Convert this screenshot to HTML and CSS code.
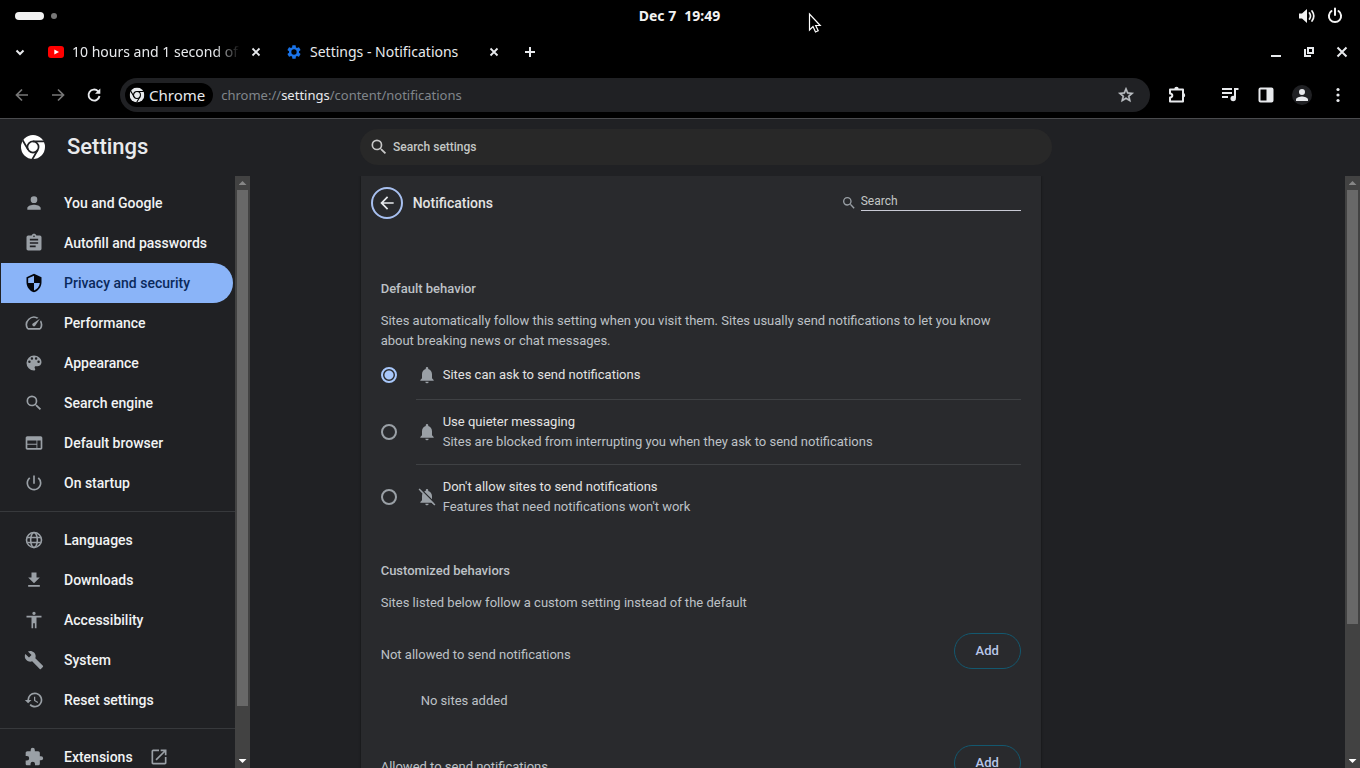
FILE: index.html
```html
<!DOCTYPE html>
<html lang="en">
  <head>
    <meta charset="UTF-8" />
    <meta name="viewport" content="width=device-width, initial-scale=1.0" />
    <title>Settings - Notifications</title>
    <link rel="stylesheet" href="styles.css">
  </head>
  <body>
    <!-- Desktop top bar -->
    <div class="topbar">
      <div class="workspaces">
        <span class="workspace active"></span>
        <span class="workspace"></span>
      </div>
      <time class="clock"><span>Dec 7</span><span>19:49</span></time>
      <div class="system-icons">
        <svg class="icon-18" viewBox="0 0 18 18"><path d="M1 6.500h3L9 2v14l-5-4.500H1z" fill="currentColor"/><path d="M11.500 6q2 3 0 6M14 4q3.600 5 0 10" fill="none" stroke="currentColor" stroke-width="1.700" stroke-linecap="round"/></svg>
        <svg class="icon-18" viewBox="0 0 18 18"><path d="M5.500 4a6.100 6.100 0 1 0 7 0M9 1.500V8" fill="none" stroke="currentColor" stroke-width="2" stroke-linecap="round"/></svg>
      </div>
    </div>

    <!-- Tab strip -->
    <div class="tabstrip">
      <button class="tab-search" aria-label="Search tabs"><svg class="icon-16" viewBox="0 0 16 16"><path d="M4.500 6.500 8 10l3.500-3.500" fill="none" stroke="currentColor" stroke-width="2"/></svg></button>
      <div class="tab">
        <svg class="icon-16" viewBox="0 0 16 16"><rect y="2" width="16" height="12" rx="3" fill="#f00"/><path d="M6.300 5.400v5.200L11 8z" fill="#fff"/></svg>
        <span class="tab-title fade">10 hours and 1 second of</span>
        <button aria-label="Close tab"><svg class="icon-16" viewBox="0 0 16 16"><path d="m4.500 4.500 7 7m0-7-7 7" stroke="currentColor" stroke-width="1.800"/></svg></button>
      </div>
      <div class="tab">
        <svg class="icon-16" viewBox="0 0 24 24"><path fill="#1a73e8" d="M19.430 12.980c.04-.32.07-.64.07-.98s-.03-.66-.07-.98l2.110-1.650c.19-.15.24-.42.12-.64l-2-3.460c-.12-.22-.39-.3-.61-.22l-2.490 1c-.52-.4-1.080-.73-1.690-.98l-.38-2.650C14.460 2.180 14.250 2 14 2h-4c-.25 0-.46.18-.49.42l-.38 2.650c-.61.25-1.170.59-1.690.98l-2.490-1c-.23-.09-.49 0-.61.22l-2 3.460c-.13.22-.07.49.12.64l2.110 1.650c-.04.32-.07.65-.07.98s.03.66.07.98l-2.110 1.650c-.19.15-.24.42-.12.64l2 3.460c.12.22.39.3.61.22l2.490-1c.52.4 1.080.73 1.690.98l.38 2.650c.03.24.24.42.49.42h4c.25 0 .46-.18.49-.42l.38-2.650c.61-.25 1.170-.59 1.690-.98l2.490 1c.23.09.49 0 .61-.22l2-3.460c.12-.22.07-.49-.12-.64zM12 16a4 4 0 1 1 0-8 4 4 0 0 1 0 8z"/></svg>
        <span class="tab-title">Settings - Notifications</span>
        <button aria-label="Close tab"><svg class="icon-16" viewBox="0 0 16 16"><path d="m4.500 4.500 7 7m0-7-7 7" stroke="currentColor" stroke-width="1.800"/></svg></button>
      </div>
      <button class="new-tab" aria-label="New tab"><svg class="icon-16" viewBox="0 0 16 16"><path d="M8 3v10M3 8h10" stroke="currentColor" stroke-width="2"/></svg></button>
      <div class="window-buttons">
        <button aria-label="Minimize"><svg class="icon-16" viewBox="0 0 16 16"><path d="M3 12h10" stroke="currentColor" stroke-width="2"/></svg></button>
        <button aria-label="Restore"><svg class="icon-16" viewBox="0 0 16 16"><path d="M7 4h5v5H7zM4 5v7h6" fill="none" stroke="currentColor" stroke-width="2"/></svg></button>
        <button aria-label="Close"><svg class="icon-16" viewBox="0 0 16 16"><path d="m3.500 3.500 9 9m0-9-9 9" stroke="currentColor" stroke-width="2"/></svg></button>
      </div>
    </div>

    <!-- Toolbar -->
    <div class="toolbar">
      <button class="disabled" aria-label="Back"><svg class="icon-16" viewBox="0 0 16 16"><path d="M14 8H3m5-5.500L2.500 8 8 13.500" fill="none" stroke="currentColor" stroke-width="1.700"/></svg></button>
      <button class="disabled" aria-label="Forward"><svg class="icon-16" viewBox="0 0 16 16"><path d="M2 8h11M8 2.500 13.500 8 8 13.500" fill="none" stroke="currentColor" stroke-width="1.700"/></svg></button>
      <button aria-label="Reload"><svg class="icon-16" viewBox="0 0 16 16"><path d="M13.500 9A5.500 5.500 0 1 1 12 4.200l1.300 1.300" fill="none" stroke="currentColor" stroke-width="1.900"/><path d="M14.300 1.500v5.300H9z" fill="currentColor"/></svg></button>
      <div class="omnibox">
        <button class="chip">
          <svg class="icon-16" viewBox="-1 -1 26 26"><use href="#chrome-logo" width="24" height="24"/></svg>
          <span>Chrome</span>
        </button>
        <span class="url">chrome://<b>settings</b>/content/notifications</span>
        <button class="star" aria-label="Bookmark this tab"><svg class="icon-18" viewBox="0 0 24 24"><path fill="currentColor" stroke="currentColor" stroke-width=".7" d="m22 9.240-7.190-.62L12 2 9.190 8.630 2 9.240l5.460 4.730L5.820 21 12 17.270 18.180 21l-1.630-7.030zM12 15.400l-3.760 2.270 1-4.280-3.320-2.880 4.380-.38L12 6.100l1.710 4.040 4.380.38-3.320 2.880 1 4.280z"/></svg></button>
      </div>
      <div class="toolbar-actions">
        <button aria-label="Extensions"><svg class="icon-18" viewBox="0 0 18 18"><path fill="none" stroke="currentColor" stroke-width="2" stroke-linejoin="round" d="M2 3.500h13v12H2v-4q2.300-.3 2.300-2T2 7.500z"/><path fill="currentColor" d="M6.300 3a2.200 2.200 0 0 1 4.400 0zM15 7a2.200 2.200 0 0 1 0 4.400z"/></svg></button>
        <button class="media" aria-label="Media controls"><svg class="icon-18" viewBox="0 0 18 18"><path d="M1 3h10M1 7h10M1 11h6" stroke="currentColor" stroke-width="1.800"/><path d="M14 12V3h3.500" fill="none" stroke="currentColor" stroke-width="2"/><circle cx="12.200" cy="12.500" r="2.700" fill="currentColor"/></svg></button>
        <button aria-label="Side panel"><svg class="icon-18" viewBox="0 0 18 18"><rect x="2.500" y="2.500" width="13" height="13" rx="1" fill="none" stroke="currentColor" stroke-width="2"/><path d="M9.500 2H16v14H9.500z" fill="currentColor"/></svg></button>
        <button class="profile" aria-label="Profile"><svg class="icon-18" viewBox="0 0 24 24"><use href="#person"/></svg></button>
        <button aria-label="Menu"><svg class="icon-18" viewBox="0 0 18 18" fill="currentColor"><circle cx="9" cy="3.500" r="1.600"/><circle cx="9" cy="9" r="1.600"/><circle cx="9" cy="14.500" r="1.600"/></svg></button>
      </div>
    </div>

    <!-- Settings page -->
    <header class="page-header">
      <div class="brand">
        <svg class="icon-24" viewBox="0 0 24 24"><use href="#chrome-logo"/></svg>
        <h1>Settings</h1>
      </div>
      <label class="settings-search">
        <svg class="icon-20" viewBox="0 0 24 24"><use href="#search"/></svg>
        <input type="text" placeholder="Search settings" aria-label="Search settings">
      </label>
    </header>

    <div class="page">
      <nav class="sidebar">
        <a href="#"><svg class="icon-20" viewBox="0 0 24 24"><use href="#person"/></svg>You and Google</a>
        <a href="#"><svg class="icon-20" viewBox="0 0 24 24"><path d="M19 3h-4.180C14.400 1.840 13.300 1 12 1s-2.400.84-2.820 2H5a2 2 0 0 0-2 2v14c0 1.100.9 2 2 2h14a2 2 0 0 0 2-2V5a2 2 0 0 0-2-2zm-7 0a1 1 0 1 1 0 2 1 1 0 0 1 0-2zm2 14H7v-2h7zm3-4H7v-2h10zm0-4H7V7h10z"/></svg>Autofill and passwords</a>
        <a href="#" class="selected"><svg class="icon-20" viewBox="0 0 24 24"><path d="M12 1 3 5v6c0 5.550 3.840 10.740 9 12 5.160-1.260 9-6.450 9-12V5zm0 10.990h7c-.53 4.120-3.280 7.790-7 8.940V12H5V6.300l7-3.110z"/></svg>Privacy and security</a>
        <a href="#"><svg class="icon-20" viewBox="0 0 24 24"><path d="m20.380 8.570-1.230 1.850a8 8 0 0 1-.22 7.580H5.070A8 8 0 0 1 15.580 6.850l1.850-1.230A10 10 0 0 0 3.350 19a2 2 0 0 0 1.720 1h13.850a2 2 0 0 0 1.740-1 10 10 0 0 0-.27-10.440zm-9.790 6.840a2 2 0 0 0 2.830 0l5.660-8.490-8.490 5.660a2 2 0 0 0 0 2.830z"/></svg>Performance</a>
        <a href="#"><svg class="icon-20" viewBox="0 0 24 24"><path d="M12 3a9 9 0 0 0 0 18c.83 0 1.500-.67 1.500-1.500 0-.39-.15-.74-.39-1.010-.23-.26-.38-.61-.38-.99 0-.83.67-1.500 1.500-1.500H16c2.760 0 5-2.240 5-5 0-4.420-4.030-8-9-8zm-5.500 9a1.500 1.500 0 1 1 0-3 1.500 1.500 0 0 1 0 3zm3-4a1.500 1.500 0 1 1 0-3 1.500 1.500 0 0 1 0 3zm5 0a1.500 1.500 0 1 1 0-3 1.500 1.500 0 0 1 0 3zm3 4a1.500 1.500 0 1 1 0-3 1.500 1.500 0 0 1 0 3z"/></svg>Appearance</a>
        <a href="#"><svg class="icon-20" viewBox="0 0 24 24"><use href="#search"/></svg>Search engine</a>
        <a href="#"><svg class="icon-20" viewBox="0 0 24 24"><path d="M20 4H4c-1.100 0-1.990.9-1.990 2L2 18c0 1.100.9 2 2 2h16c1.100 0 2-.9 2-2V6c0-1.100-.9-2-2-2zm-5 14H4v-4h11zm0-5H4V9h11zm5 5h-4V9h4z"/></svg>Default browser</a>
        <a href="#"><svg class="icon-20" viewBox="0 0 24 24"><path d="M13 3h-2v10h2zm4.830 2.170-1.420 1.420A6.920 6.920 0 0 1 19 12a7 7 0 1 1-11.420-5.420L6.170 5.170A9 9 0 1 0 21 12a8.930 8.930 0 0 0-3.170-6.830z"/></svg>On startup</a>
        <hr>
        <a href="#"><svg class="icon-20" viewBox="0 0 24 24"><g fill="none" stroke="currentColor" stroke-width="1.900"><circle cx="12" cy="12" r="9"/><ellipse cx="12" cy="12" rx="4" ry="9"/><path d="M4 9h16M4 15h16"/></g></svg>Languages</a>
        <a href="#"><svg class="icon-20" viewBox="0 0 24 24"><path d="M19 9h-4V3H9v6H5l7 7zM5 18v2h14v-2z"/></svg>Downloads</a>
        <a href="#"><svg class="icon-20" viewBox="0 0 24 24"><path d="M12 2a2 2 0 1 1 0 4 2 2 0 0 1 0-4zm9 7h-6v13h-2v-6h-2v6H9V9H3V7h18z"/></svg>Accessibility</a>
        <a href="#"><svg class="icon-20" viewBox="0 0 24 24"><path d="m22.700 19-9.100-9.100c.9-2.300.4-5-1.500-6.900-2-2-5-2.400-7.400-1.300L9 6 6 9 1.600 4.700C.4 7.100.9 10.100 2.900 12.100c1.900 1.900 4.600 2.400 6.900 1.500l9.100 9.100c.4.4 1 .4 1.400 0l2.300-2.300c.5-.4.5-1.100.1-1.400z"/></svg>System</a>
        <a href="#"><svg class="icon-20" viewBox="0 0 24 24"><path d="M13 3a9 9 0 0 0-9 9H1l3.890 3.890.07.14L9 12H6a7 7 0 1 1 2.060 4.940l-1.420 1.420A9 9 0 1 0 13 3zm-1 5v5l4.280 2.540.72-1.210-3.500-2.080V8z"/></svg>Reset settings</a>
        <hr>
        <a href="#"><svg class="icon-20" viewBox="0 0 24 24"><path d="M20.500 11H19V7a2 2 0 0 0-2-2h-4V3.500a2.500 2.500 0 0 0-5 0V5H4c-1.100 0-1.990.9-1.990 2v3.800H3.500a2.700 2.700 0 0 1 0 5.400H2V20c0 1.100.9 2 2 2h3.800v-1.500a2.700 2.700 0 0 1 5.400 0V22H17a2 2 0 0 0 2-2v-4h1.500a2.500 2.500 0 0 0 0-5z"/></svg>Extensions<svg class="icon-20 external" viewBox="0 0 24 24"><path d="M19 19H5V5h7V3H5a2 2 0 0 0-2 2v14c0 1.100.89 2 2 2h14c1.100 0 2-.9 2-2v-7h-2zM14 3v2h3.590l-9.830 9.830 1.410 1.410L19 6.410V10h2V3z"/></svg></a>
      </nav>
      <div class="scrollbar" aria-hidden="true">
        <span class="arrow up"></span>
        <div class="track"><div class="thumb nav-thumb"></div></div>
        <span class="arrow down"></span>
      </div>

      <main>
        <div class="card">
          <div class="card-header">
            <button class="back" aria-label="Back"><svg class="icon-20" viewBox="0 0 24 24"><path d="M20 11H7.830l5.590-5.590L12 4l-8 8 8 8 1.410-1.410L7.830 13H20z"/></svg></button>
            <h2>Notifications</h2>
            <label class="card-search">
              <svg class="icon-16" viewBox="0 0 24 24"><use href="#search"/></svg>
              <input type="text" placeholder="Search" aria-label="Search sites">
            </label>
          </div>

          <section>
            <h3>Default behavior</h3>
            <p>Sites automatically follow this setting when you visit them. Sites usually send notifications to let you know about breaking news or chat messages.</p>
            <div class="option">
              <input type="radio" name="behavior" id="ask" checked>
              <label for="ask">
                <svg class="icon-20" viewBox="0 0 24 24"><use href="#bell"/></svg>
                <span>Sites can ask to send notifications</span>
              </label>
            </div>
            <div class="option two-line">
              <input type="radio" name="behavior" id="quiet">
              <label for="quiet">
                <svg class="icon-20" viewBox="0 0 24 24"><use href="#bell"/></svg>
                <span>Use quieter messaging<small>Sites are blocked from interrupting you when they ask to send notifications</small></span>
              </label>
            </div>
            <div class="option two-line">
              <input type="radio" name="behavior" id="block">
              <label for="block">
                <svg class="icon-20" viewBox="0 0 24 24"><path d="M20 18.690 7.840 6.140 5.270 3.490 4 4.760l2.800 2.800v.01c-.52.99-.8 2.160-.8 3.420v5l-2 2v1h13.730l2 2L21 19.720zM12 22a2 2 0 0 0 2-2h-4c0 1.110.89 2 2 2zm6-7.320V11c0-3.080-1.640-5.640-4.500-6.320V4a1.500 1.500 0 0 0-3 0v.68c-.15.03-.29.08-.42.12-.52.15-1 .38-1.460.67z"/><path d="M2.500 2.500l19 19" stroke="currentColor" stroke-width="1.800"/><path d="M5 3l17 17" stroke="#292a2d" stroke-width="1.200"/></svg>
                <span>Don't allow sites to send notifications<small>Features that need notifications won't work</small></span>
              </label>
            </div>
          </section>

          <section class="custom">
            <h3>Customized behaviors</h3>
            <p>Sites listed below follow a custom setting instead of the default</p>
            <div class="list-header">
              <span>Not allowed to send notifications</span>
              <button>Add</button>
            </div>
            <div class="empty">No sites added</div>
            <div class="list-header">
              <span>Allowed to send notifications</span>
              <button>Add</button>
            </div>
          </section>
        </div>
      </main>
      <div class="scrollbar" aria-hidden="true">
        <span class="arrow up"></span>
        <div class="track"><div class="thumb page-thumb"></div></div>
        <span class="arrow down"></span>
      </div>
    </div>

    <svg class="cursor" viewBox="0 0 14 22" aria-hidden="true"><path d="M1.500 2v16l3.500-3.500 2.500 5.500 2.700-1.200L7.700 13.500h4.500z" fill="#000" stroke="#fff" stroke-width="1.200"/></svg>

    <!-- Shared icons -->
    <svg class="sprite" aria-hidden="true">
      <symbol id="chrome-logo" viewBox="0 0 24 24">
        <circle cx="12" cy="12" r="12" fill="currentColor"/>
        <g fill="none" stroke="var(--logo-bg)" stroke-width="1.700">
          <circle cx="12" cy="12" r="5.600"/>
          <path d="M12 6.400h11M7.150 14.800 1.650 5.300M16.850 14.800l-5.500 9.500"/>
        </g>
      </symbol>
      <symbol id="person" viewBox="0 0 24 24"><path fill="currentColor" d="M12 12a4 4 0 1 0 0-8 4 4 0 0 0 0 8zm0 2c-2.670 0-8 1.340-8 4v2h16v-2c0-2.660-5.330-4-8-4z"/></symbol>
      <symbol id="search" viewBox="0 0 24 24"><path fill="currentColor" d="M15.500 14h-.79l-.28-.27A6.470 6.470 0 0 0 16 9.500 6.500 6.500 0 1 0 9.500 16c1.610 0 3.090-.59 4.230-1.570l.27.28v.79l5 4.990L20.490 19zm-6 0a4.500 4.500 0 1 1 0-9 4.500 4.500 0 0 1 0 9z"/></symbol>
      <symbol id="bell" viewBox="0 0 24 24"><path fill="currentColor" d="M12 22a2 2 0 0 0 2-2h-4a2 2 0 0 0 2 2zm6-6v-5c0-3.070-1.640-5.640-4.500-6.320V4a1.500 1.500 0 0 0-3 0v.68C7.630 5.360 6 7.920 6 11v5l-2 2v1h16v-1z"/></symbol>
    </svg>
  </body>
</html>
```

FILE: styles.css
```css
* {
  box-sizing: border-box;
}
body {
  --logo-bg: #000;
  margin: 0;
  height: 100vh;
  display: flex;
  flex-direction: column;
  overflow: hidden;
  background-color: #000;
  color: #e8eaed;
  font-family: Roboto, "Liberation Sans", sans-serif;
  font-size: 13px;
  line-height: 20px;
}
button,
input {
  font: inherit;
  color: inherit;
}
button {
  display: flex;
  align-items: center;
  justify-content: center;
  padding: 0;
  border: none;
  background: none;
}
svg {
  display: block;
  flex-shrink: 0;
}
.icon-16 {
  width: 16px;
  height: 16px;
}
.icon-18 {
  width: 18px;
  height: 18px;
}
.icon-20 {
  width: 20px;
  height: 20px;
  fill: currentColor;
}
.icon-24 {
  width: 24px;
  height: 24px;
}
.sprite {
  display: none;
}

/* Desktop top bar */
.topbar {
  display: grid;
  grid-template-columns: 1fr auto 1fr;
  align-items: center;
  height: 32px;
  padding: 0 16px 0 15px;
  flex-shrink: 0;
  color: #f2f2f2;
  font-family: "Noto Sans", sans-serif;
}
.workspaces {
  display: flex;
  align-items: center;
  gap: 7px;
}
.workspace {
  width: 6px;
  height: 6px;
  border-radius: 50%;
  background-color: #777;
}
.workspace.active {
  width: 29px;
  height: 8px;
  border-radius: 4px;
  background-color: #f2f2f2;
}
.clock {
  display: flex;
  gap: 8px;
  font-size: 14px;
  font-weight: 700;
}
.system-icons {
  display: flex;
  justify-content: flex-end;
  gap: 10px;
}

/* Tab strip */
.tabstrip {
  display: flex;
  align-items: center;
  height: 40px;
  padding: 0 10px 0 12px;
  flex-shrink: 0;
  font-family: "Noto Sans", sans-serif;
  font-size: 14px;
}
.tab-search {
  margin-right: 12px;
}
.tab {
  display: flex;
  align-items: center;
  gap: 8px;
  width: 238px;
  padding: 0 14px 0 8px;
}
.tab-title {
  flex: 1;
  white-space: nowrap;
}
.fade {
  mask-image: linear-gradient(to right, #000 85%, transparent);
}
.new-tab {
  margin-left: 6px;
}
.window-buttons {
  display: flex;
  gap: 17px;
  margin-left: auto;
}

/* Toolbar */
.toolbar {
  display: flex;
  align-items: center;
  gap: 20px;
  height: 46px;
  padding: 0 13px 0 14px;
  flex-shrink: 0;
  font-family: "Noto Sans", sans-serif;
}
.toolbar .disabled {
  color: #777;
}
.omnibox {
  display: flex;
  align-items: center;
  flex: 1;
  height: 34px;
  margin: 0 -2px;
  padding: 0 15px 0 5px;
  border-radius: 17px;
  background-color: #202124;
}
.chip {
  gap: 4px;
  height: 24px;
  padding: 0 8px 0 4px;
  border-radius: 12px;
  background-color: #000;
  font-size: 15px;
}
.url {
  flex: 1;
  margin-left: 8px;
  color: #80868b;
}
.url b {
  color: #e8eaed;
  font-weight: normal;
}
.star {
  color: #bdc1c6;
}
.toolbar-actions {
  display: flex;
  gap: 18px;
}
.media {
  margin-left: 17px;
}
.profile {
  border-radius: 50%;
  background-color: #202124;
  box-shadow: 0 0 0 1px #202124;
}

/* Settings header */
.page-header {
  --logo-bg: #202124;
  display: flex;
  align-items: center;
  height: 58px;
  padding-bottom: 2px;
  flex-shrink: 0;
  border-top: 1px solid #4a4b4e;
  background-color: #202124;
}
.brand {
  display: flex;
  align-items: center;
  gap: 22px;
  flex: 0 0 360px;
  padding-left: 21px;
  color: #fff;
}
.brand h1 {
  margin: 0;
  color: #e8eaed;
  font-size: 22px;
  font-weight: 500;
}
.settings-search {
  display: flex;
  align-items: center;
  gap: 4px;
  flex: 0 1 692px;
  height: 36px;
  padding: 0 9px;
  border-radius: 18px;
  background-color: #282828;
  color: #c7c7c7;
}
.settings-search input {
  flex: 1;
  padding: 0;
  border: none;
  outline: none;
  background: none;
  font-size: 12px;
  font-weight: 500;
}
input::placeholder {
  color: #c4c7c5;
  opacity: 1;
}

/* Settings page */
.page {
  display: flex;
  flex: 1;
  min-height: 0;
  background-color: #202124;
}
.sidebar {
  flex: 0 0 235px;
  padding: 7px 0 0;
  overflow: hidden;
}
.sidebar a {
  display: flex;
  align-items: center;
  gap: 20px;
  height: 40px;
  margin: 0 2px 0 1px;
  padding-left: 23px;
  border-radius: 0 20px 20px 0;
  color: #f1f3f4;
  font-size: 14px;
  font-weight: 500;
  text-decoration: none;
}
.sidebar svg {
  color: #9aa0a6;
}
.sidebar .selected {
  background-color: #8ab4f8;
  color: #0b2a5c;
}
.sidebar .selected svg {
  color: #05070d;
}
.sidebar .external {
  margin-left: -4px;
}
.sidebar hr {
  height: 1px;
  margin: 8px 0;
  border: none;
  background-color: #37393c;
}

/* Scrollbars */
.scrollbar {
  display: flex;
  flex-direction: column;
  align-items: center;
  flex: 0 0 15px;
  background-color: #424242;
}
.arrow {
  width: 8px;
  height: 4px;
  margin: 5px 0;
}
.arrow.up {
  background-color: #868686;
  clip-path: polygon(50% 0, 100% 100%, 0 100%);
}
.arrow.down {
  background-color: #fff;
  clip-path: polygon(0 0, 100% 0, 50% 100%);
}
.track {
  flex: 1;
  width: 11px;
}
.thumb {
  background-color: #686868;
}
.nav-thumb {
  height: 91.5%;
}
.page-thumb {
  height: 77%;
}

main {
  display: grid;
  grid-template-columns: 4fr minmax(0, 680px) 11fr;
  flex: 1;
  min-width: 0;
  overflow: hidden;
}
.card {
  grid-column: 2;
  padding: 0 20px;
  background-color: #292a2d;
  box-shadow: 0 0 2px #111;
  color: #bdc1c6;
}
.card-header {
  display: flex;
  align-items: center;
  height: 54px;
}
.back {
  width: 32px;
  height: 32px;
  margin-left: -10px;
  border: 2px solid #a8c0f0;
  border-radius: 50%;
  color: #e8eaed;
}
.card-header h2 {
  margin: 0 auto 0 10px;
  color: #e3e3e3;
  font-size: 14px;
  font-weight: 500;
}
.card-search {
  display: flex;
  align-items: center;
  gap: 4px;
  color: #9aa0a6;
}
.card-search input {
  width: 160px;
  height: 20px;
  margin-bottom: 4px;
  padding: 0;
  border: none;
  border-bottom: 1px solid #c8c9d4;
  outline: none;
  background: none;
  font-size: 12px;
}
section {
  margin-top: 49px;
}
.custom {
  margin-top: 31px;
}
h3 {
  margin: 0;
  font-size: 13px;
  font-weight: 500;
}
section p {
  margin: 12px 0 0;
}
.option {
  display: flex;
  align-items: center;
  gap: 19px;
}
.option label {
  display: flex;
  align-items: center;
  gap: 6px;
  flex: 1;
  height: 49px;
  padding-left: 1px;
  border-bottom: 1px solid #3f4144;
  color: #e3e3e3;
}
.option.two-line label {
  height: 65px;
}
.option:last-child label {
  border-bottom-color: transparent;
}
.option svg {
  color: #9aa0a6;
}
.option small {
  display: block;
  color: #bdc1c6;
  font-size: 13px;
}
input[type="radio"] {
  appearance: none;
  width: 16px;
  height: 16px;
  margin: 0 0 1px;
  border: 2px solid #9aa0a6;
  border-radius: 50%;
}
input[type="radio"]:checked {
  border-color: #a8c7fa;
  background: radial-gradient(circle, #a8c7fa 4px, transparent 5px);
}
.list-header {
  display: flex;
  justify-content: space-between;
  margin-top: 20px;
}
.list-header span {
  padding-top: 12px;
}
.list-header button {
  width: 67px;
  height: 36px;
  border: 1px solid #13586f;
  border-radius: 18px;
  color: #b8c6e8;
  font-weight: 500;
}
.empty {
  padding: 22px 40px 14px;
}

.cursor {
  position: absolute;
  top: 12px;
  left: 808px;
  width: 14px;
  height: 22px;
}
```
